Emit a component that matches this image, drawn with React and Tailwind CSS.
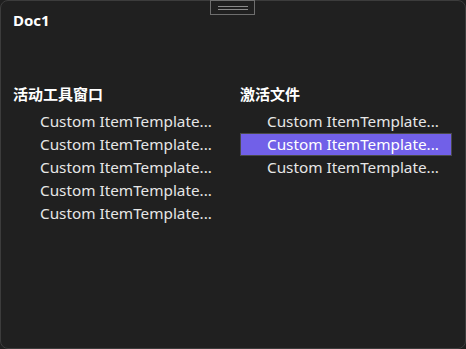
import React from "react";

const font = { fontFamily: '"Noto Sans", "Noto Sans CJK SC", sans-serif' };

function Item({ selected }) {
  return (
    <div
      className={
        "h-[23px] flex items-center pl-[26px] text-[15.3px] text-[#e6e6e6] border " +
        (selected ? "bg-[#7160e8] border-[#4a4a4a] text-white" : "border-transparent")
      }
    >
      <span className="leading-none">Custom ItemTemplate...</span>
    </div>
  );
}

function Column({ title, count, selectedIndex }) {
  return (
    <div className="flex flex-col">
      <div className="h-[20px] flex items-center text-[15px] font-bold text-white">{title}</div>
      <div className="flex flex-col mt-[6px]">
        {Array.from({ length: count }).map((_, i) => (
          <Item key={i} selected={i === selectedIndex} />
        ))}
      </div>
    </div>
  );
}

export default function App() {
  return (
    <div style={font} className="w-[466px] h-[349px] bg-[#1f1f1f] overflow-hidden">
      <div className="relative w-full h-full bg-[#202020] border border-[#3c3c3c] rounded-[8px]">
        <div className="absolute left-[209px] top-[-1px] w-[45px] h-[15px] border border-[#6e6e6e] flex flex-col items-center justify-center gap-[2px]">
          <div className="w-[30px] h-px bg-[#8a8a8a]" />
          <div className="w-[30px] h-px bg-[#8a8a8a]" />
        </div>
        <div className="pl-[12px] pt-[9px] text-[15px] font-bold text-white h-[20px] leading-[20px]">Doc1</div>
        <div className="grid grid-cols-[227px_212px] pl-[12px] mt-[63px]">
          <Column title="活动工具窗口" count={5} selectedIndex={-1} />
          <Column title="激活文件" count={3} selectedIndex={1} />
        </div>
      </div>
    </div>
  );
}
